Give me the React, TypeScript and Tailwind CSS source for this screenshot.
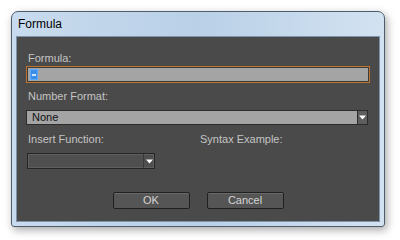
import { ReactNode } from 'react'

const FONT = { fontFamily: '"Liberation Sans", Arial, sans-serif' }

function Label({ children }: { children: ReactNode }) {
  return <div className="text-[11px] leading-[12px] text-[#c4c4c4]">{children}</div>
}

function Arrow() {
  return (
    <svg width="7" height="5" viewBox="0 0 7 5">
      <path d="M0 0.5h7L3.5 4.5z" fill="#ffffff" />
    </svg>
  )
}

function Button({ label }: { label: string }) {
  return (
    <div className="w-[77px] h-[17px] rounded-[2px] border border-[#202020] bg-[#555555] shadow-[inset_0_1px_0_#6a6a6a] flex items-center justify-center text-[11px] text-[#d4d4d4]">
      {label}
    </div>
  )
}

export default function App() {
  return (
    <div className="w-[400px] h-[240px] bg-white pt-[11px] pl-[11px]" style={FONT}>
      <div className="w-[374px] h-[216px] rounded-t-[7px] rounded-b-[3px] border border-[#4d5d6e] bg-gradient-to-r from-[#c9dbee] via-[#b9d0e7] to-[#d3e2f1] shadow-[2px_3px_8px_rgba(0,0,0,0.35)] flex flex-col px-[4px] pb-[4px]">
        <div className="h-[24px] flex items-center pl-[2px] text-[12px] text-black">
          Formula
        </div>
        <div className="flex-1 border border-[#7f93a8] bg-[#4a4a4a] flex flex-col pl-[9px] pr-[9px]">
          <div className="mt-[15px] pl-[2px]">
            <Label>Formula:</Label>
          </div>
          <div className="mt-[2px] h-[17px] border border-[#bd7430] p-[1px] bg-[#3c3c3c]">
            <div className="h-full bg-[#a4a4a4] flex items-center pl-[2px]">
              <div className="w-[8px] h-[11px] bg-[#3b8fe8] border border-[#5aa8ff] flex items-center justify-center">
                <div className="w-[4px] h-[2px] bg-[#cfe5ff]" />
              </div>
            </div>
          </div>
          <div className="mt-[7px] pl-[2px]">
            <Label>Number Format:</Label>
          </div>
          <div className="mt-[8px] mr-[2px] h-[15px] border border-[#2c2c2c] bg-[#a4a4a4] flex">
            <div className="flex-1 text-[11px] leading-[13px] text-[#111111] pl-[5px]">None</div>
            <div className="w-[10px] bg-[#5e5e5e] border-l border-[#2c2c2c] flex items-center justify-center">
              <Arrow />
            </div>
          </div>
          <div className="mt-[8px] pl-[2px] flex">
            <div className="w-[172px]">
              <Label>Insert Function:</Label>
            </div>
            <Label>Syntax Example:</Label>
          </div>
          <div className="mt-[8px] ml-[1px] w-[128px] h-[16px] border border-[#262626] bg-[#4f4f4f] shadow-[inset_0_0_0_1px_#5f5f5f] flex">
            <div className="flex-1" />
            <div className="w-[11px] border-l border-[#3a3a3a] flex items-center justify-center">
              <Arrow />
            </div>
          </div>
          <div className="mt-[23px] flex justify-center gap-[17px]">
            <Button label="OK" />
            <Button label="Cancel" />
          </div>
        </div>
      </div>
    </div>
  )
}
